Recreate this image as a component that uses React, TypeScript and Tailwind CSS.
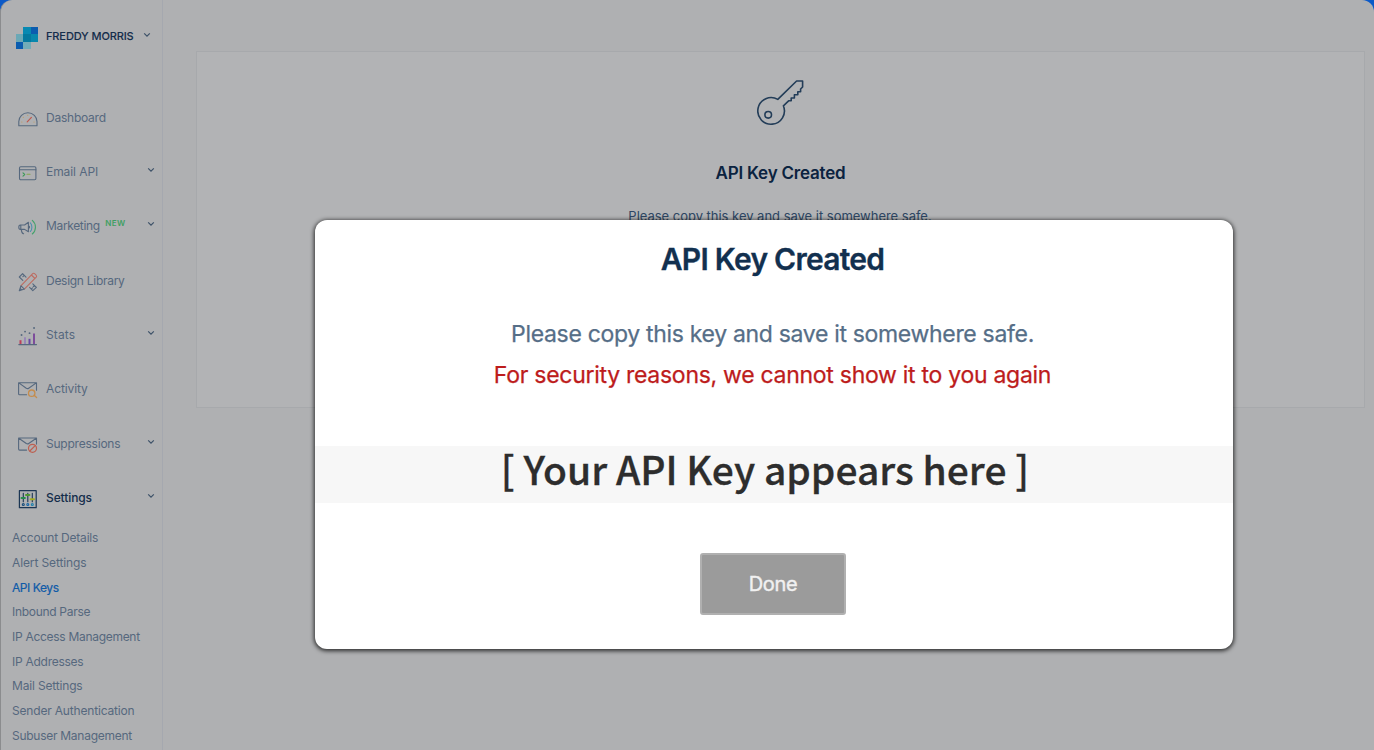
import type { ReactNode } from 'react'
import { clsx } from 'clsx'

interface NavItem {
  label: string
  icon: ReactNode
  badge?: string
  expandable?: boolean
  active?: boolean
  spacing: string
}

function Icon({ children }: { children: ReactNode }) {
  return (
    <svg
      viewBox="0 0 20 20"
      className="mt-[2px] h-5 w-5 shrink-0"
      fill="none"
      stroke="#56687e"
      strokeWidth="1.1"
      strokeLinecap="round"
      strokeLinejoin="round"
    >
      {children}
    </svg>
  )
}

function Chevron({ className }: { className?: string }) {
  return (
    <svg viewBox="0 0 8 6" className={clsx('h-[6px] w-2 shrink-0', className)} fill="none" stroke="currentColor" strokeWidth="1.2">
      <path d="M1.2 1.4 4 4.2 6.8 1.4" />
    </svg>
  )
}

function Logo() {
  return (
    <svg viewBox="0 0 24 24" className="h-[22px] w-[22px] shrink-0" shapeRendering="crispEdges">
      <rect x="8" width="8" height="8" fill="#0789b2" />
      <rect x="16" width="8" height="8" fill="#0b5caf" />
      <rect y="8" width="8" height="8" fill="#6ba8b6" />
      <rect x="8" y="8" width="8" height="8" fill="#04799f" />
      <rect x="16" y="8" width="8" height="8" fill="#0787ad" />
      <rect y="16" width="8" height="8" fill="#0b5caf" />
      <rect x="8" y="16" width="8" height="8" fill="#72acb8" />
    </svg>
  )
}

const navItems: NavItem[] = [
  {
    label: 'Dashboard',
    spacing: 'tracking-[-0.23px]',
    icon: (
      <Icon>
        <path d="M.8 16.8v-4.2a9.1 8.8 0 0 1 18.2 0v4.2z" />
        <path d="m9.2 12.8 4.2-4.4" stroke="#c0594d" strokeWidth="1.2" />
        <path d="M3.8 13h.1M5.3 8.3h.1M9.7 6.2h.1M16 13h.1" stroke="#c39a5c" />
      </Icon>
    ),
  },
  {
    label: 'Email API',
    spacing: 'tracking-[-0.07px]',
    expandable: true,
    icon: (
      <Icon>
        <rect x="1.5" y="3.8" width="16.4" height="13" rx="1.2" />
        <path d="M1.5 6.8h16.4" />
        <path d="m5 9.8 1.7 1.7L5 13.2" stroke="#3c9a58" />
        <path d="M9 11.3h3" stroke="#86a64b" />
      </Icon>
    ),
  },
  {
    label: 'Marketing',
    spacing: 'tracking-[-0.35px]',
    badge: 'NEW',
    expandable: true,
    icon: (
      <Icon>
        <path d="M10.4 5.3v9.5L6.6 12.4H2.3C.3 12.4.3 8 2.3 8h4.3zM2.8 8v4.3M3.3 12.6c.2 2.2 1.1 3.9 2.3 4.2M10.4 8.7c1.6.3 1.6 2.5 0 2.8" />
        <path d="M12.3 5.9c2.1 1.7 2.1 6.9 0 8.6" stroke="#4d8fb0" />
        <path d="M14.3 3.4c4.2 3.5 4.2 10 0 13.6" stroke="#43a26b" />
      </Icon>
    ),
  },
  {
    label: 'Design Library',
    spacing: 'tracking-[-0.28px]',
    icon: (
      <Icon>
        <path d="m8 5.1-3.4-3.5L1.3 5l3.5 3.4M11.6 15.3l3.2 3.4 3.6-3.4-3.6-3.4M6.2 3.3 4.9 4.6M16.5 13.5l-1.2 1.2M14.6 15.8l-.9.8" />
        <path d="m3.1 13.6 11.6-12c1.2-1.2 4.9 2 3.5 3.6L6.6 16.9M13.4 3l3.6 3.5" stroke="#bd6c61" />
        <path d="m3 13.8-1.7 5 5.1-1.7zM2.2 16.5l1.4 1.4" />
      </Icon>
    ),
  },
  {
    label: 'Stats',
    spacing: 'tracking-[0.1px]',
    expandable: true,
    icon: (
      <Icon>
        <g strokeLinecap="butt">
          <path d="M2.5 18.2v-4" stroke="#bd405b" strokeWidth="2" />
          <path d="M7 18.2v-7" stroke="#9887b8" strokeWidth="2" />
          <path d="M11.5 18.2v-5.4" stroke="#6849a5" strokeWidth="2" />
          <path d="M16 18.2V7.5" stroke="#7d4d9b" strokeWidth="2" />
        </g>
        <path d="M.8 18.6h17.7" />
        <path d="M3.5 9h.1M7 5.6h.1M11.5 7.2h.1M16 2h.1" strokeWidth="1.8" />
      </Icon>
    ),
  },
  {
    label: 'Activity',
    spacing: 'tracking-[-0.1px]',
    icon: (
      <Icon>
        <path d="M8.6 14.7H1.6c-.6 0-1-.4-1-1V2.7h17.9v7.6M.8 2.9l7.5 5.3c.8.5 1.7.5 2.4 0l7.6-5.3" />
        <g stroke="#c58c4c" strokeWidth="1.3">
          <circle cx="13.7" cy="13.2" r="3.2" />
          <path d="m16.1 15.3 2.5 2.2" />
        </g>
      </Icon>
    ),
  },
  {
    label: 'Suppressions',
    spacing: 'tracking-[-0.22px]',
    expandable: true,
    icon: (
      <Icon>
        <path d="M8.6 15.1H1.6c-.6 0-1-.4-1-1V3h17.9v6.1M.8 3.2l7.5 5.3c.8.5 1.7.5 2.4 0l7.6-5.3" />
        <g stroke="#bd5f50" strokeWidth="1.2">
          <circle cx="14.5" cy="13.3" r="4" />
          <path d="m11.8 16 5.4-5.4" />
        </g>
      </Icon>
    ),
  },
  {
    label: 'Settings',
    spacing: 'tracking-[-0.1px]',
    expandable: true,
    active: true,
    icon: (
      <Icon>
        <rect x="1.4" y="1.7" width="16.8" height="17" stroke="#1c3654" strokeWidth="1.2" />
        <path d="M5.3 4.2v8.6M9.8 4.2v8.6M14.3 4.2v8.6" stroke="#1c3654" />
        <path d="M3.5 9h3.4" stroke="#248c4b" strokeWidth="2" />
        <path d="M8 6h3.4" stroke="#4e962f" strokeWidth="2" />
        <path d="M12.6 10.2H16" stroke="#a2aa20" strokeWidth="2" />
        <circle cx="5.3" cy="15.5" r="1" stroke="#174d7c" />
        <circle cx="9.8" cy="15.5" r="1" stroke="#1565a8" />
        <circle cx="14.3" cy="15.5" r="1" stroke="#1d83b0" />
      </Icon>
    ),
  },
]

const subItems = [
  { label: 'Account Details', spacing: 'tracking-[-0.2px]' },
  { label: 'Alert Settings', spacing: 'tracking-[-0.12px]' },
  { label: 'API Keys', spacing: 'tracking-[-0.42px]', active: true },
  { label: 'Inbound Parse', spacing: 'tracking-[-0.3px]' },
  { label: 'IP Access Management', spacing: 'tracking-[-0.29px]' },
  { label: 'IP Addresses', spacing: 'tracking-[-0.26px]' },
  { label: 'Mail Settings', spacing: 'tracking-[-0.17px]' },
  { label: 'Sender Authentication', spacing: 'tracking-[-0.18px]' },
  { label: 'Subuser Management', spacing: 'tracking-[-0.27px]' },
]

function Sidebar() {
  return (
    <aside className="flex w-[162px] shrink-0 flex-col border-r border-[#a5a8af]">
      <div className="flex h-[90.6px] items-start pl-[15px] pt-[27px]">
        <div className="flex items-center">
          <Logo />
          <span className="-mt-[4px] ml-2 text-[11px] font-medium leading-[18px] tracking-[-0.12px] text-[#142d4b] [-webkit-text-stroke:0.1px]">
            FREDDY MORRIS
          </span>
          <Chevron className="-mt-[6px] ml-[9px] text-[#3d5168]" />
        </div>
      </div>

      <nav>
        {navItems.map((item) => (
          <a
            key={item.label}
            className={clsx(
              'flex h-[54.3px] items-center pl-[17px] pr-[7px] text-[12px]',
              item.active ? 'text-[#142d4b]' : 'text-[#56687e]'
            )}
          >
            {item.icon}
            <span className={clsx('ml-2 whitespace-nowrap', item.spacing, item.active && 'font-medium')}>{item.label}</span>
            {item.badge && (
              <span className="-mt-[6px] ml-[5.5px] text-[8px] font-semibold tracking-[0.4px] text-[#3f9f62]">{item.badge}</span>
            )}
            {item.expandable && <Chevron className="-mt-1 ml-auto text-[#3d5168]" />}
          </a>
        ))}
      </nav>

      <ul className="pl-[11px] pt-[0.9px] text-[12px] text-[#56687e]">
        {subItems.map((item) => (
          <li
            key={item.label}
            className={clsx(
              'flex h-[24.7px] items-center whitespace-nowrap',
              item.spacing,
              item.active && 'text-[#105ba8] [-webkit-text-stroke:0.2px]'
            )}
          >
            {item.label}
          </li>
        ))}
      </ul>
    </aside>
  )
}

function KeyIcon() {
  return (
    <svg viewBox="0 0 48 48" className="h-12 w-12" fill="none" stroke="#233d58" strokeWidth="1.6" strokeLinejoin="round">
      <path d="M20.8 20.4 39.6 2h6v6l-2 2v2.8h-2.8v3h-3.4v3.2h-3.2v2.8h-2.6l-5.2 5a13.3 13.3 0 1 1-5.6-6.4z" />
      <circle cx="11.2" cy="35.8" r="3.3" />
    </svg>
  )
}

function KeyCreatedModal() {
  return (
    <div
      role="dialog"
      className="absolute left-[315px] top-[220px] flex h-[429px] w-[918px] flex-col rounded-xl bg-white shadow-[0_1px_4px_1px_rgba(0,0,0,0.75)]"
    >
      <div className="flex flex-col items-center whitespace-nowrap pr-[3px]">
        <h2 className="mt-[19px] text-[30px] font-semibold leading-10 tracking-[-0.75px] text-[#12304f] [-webkit-text-stroke:0.3px]">
          API Key Created
        </h2>
        <p className="mt-[39px] text-[23px] leading-8 tracking-[-0.32px] text-[#566e87] [-webkit-text-stroke:0.25px]">
          Please copy this key and save it somewhere safe.
        </p>
        <p className="mt-[9px] text-[23px] leading-8 tracking-[-0.28px] text-[#bd1c1c] [-webkit-text-stroke:0.25px]">
          For security reasons, we cannot show it to you again
        </p>
      </div>
      <div className="mt-[55px] flex h-[57px] w-full items-center justify-center bg-[#f7f7f7] pb-[12px] pr-[18px]">
        <span className="whitespace-nowrap font-['Noto_Sans_CJK_SC',sans-serif] text-[39px] font-medium leading-none text-[#2d2d2d] [-webkit-text-stroke:0.3px]">
          [ Your API Key appears here ]
        </span>
      </div>
      <div className="mt-[50px] flex justify-center pr-[2px]">
        <button className="h-[62px] w-[146px] rounded-[3px] border-2 border-[#b0b0b0] bg-[#9b9b9b] text-[20px] tracking-[-0.3px] text-[#f1f1f1] [-webkit-text-stroke:0.4px]">
          Done
        </button>
      </div>
    </div>
  )
}

export default function App() {
  return (
    <div className="relative h-[750px] w-[1374px] overflow-hidden bg-[#0b59c8] font-['Inter',sans-serif]">
      <div className="flex h-full overflow-hidden rounded-t-xl border-l border-[#8b8c8e] bg-[#afb0b2]">
        <Sidebar />
        <main className="flex-1 pl-[33px] pr-[9px] pt-[51px]">
          <section className="flex h-[357px] flex-col items-center border border-[#a7a9ac] bg-[#b2b3b5]">
            <div className="mt-[27px]">
              <KeyIcon />
            </div>
            <h1 className="mt-[34px] text-[17px] font-semibold leading-6 tracking-[-0.2px] text-[#0b2340]">API Key Created</h1>
            <p className="mt-[21px] pr-[1px] text-[13px] leading-5 tracking-[-0.02px] text-[#2d4663]">
              Please copy this key and save it somewhere safe.
            </p>
          </section>
        </main>
      </div>
      <KeyCreatedModal />
    </div>
  )
}
